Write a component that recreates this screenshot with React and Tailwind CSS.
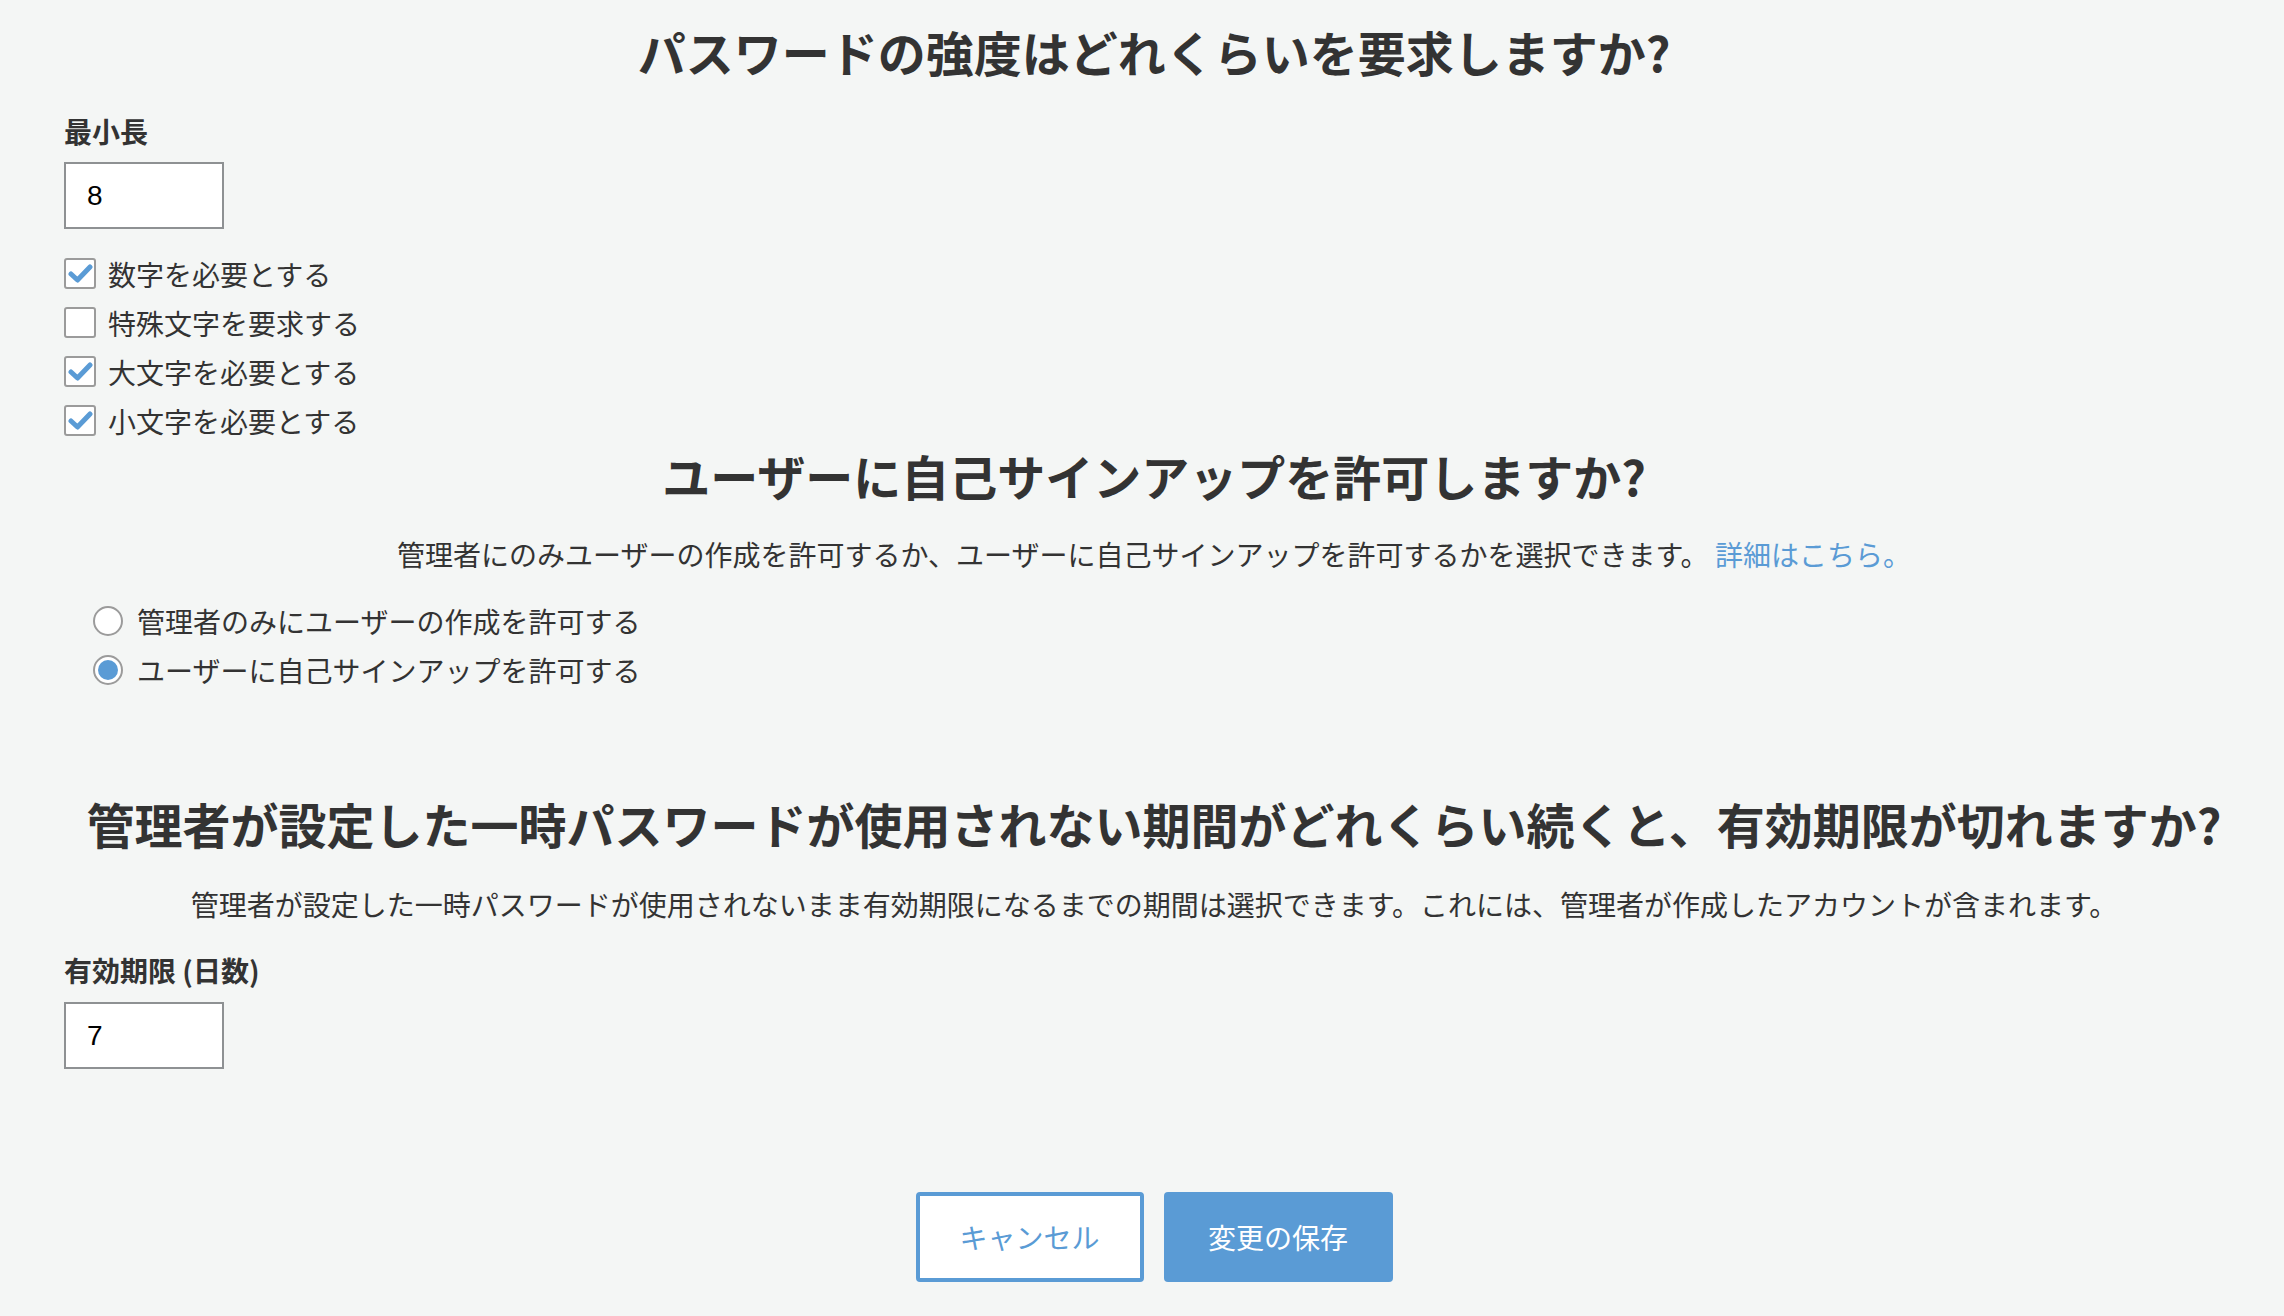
import { useState } from 'react'

function CheckBox({ checked, label }) {
  return (
    <label className="flex h-[49px] items-center gap-[12px]">
      <span className="flex h-[31px] w-[32px] items-center justify-center rounded-[3px] border-2 border-[#9b9b9b] bg-white">
        {checked && (
          <svg width="25" height="19" viewBox="0 0 25 19" fill="none">
            <path d="M3 10 L9.5 16 L22 3" stroke="#5a9bd5" strokeWidth="5" strokeLinecap="round" strokeLinejoin="round" />
          </svg>
        )}
      </span>
      <span className="text-[28px] leading-[40px] text-[#333]">{label}</span>
    </label>
  )
}

function Radio({ checked, label, onClick }) {
  return (
    <label className="flex h-[49px] items-center gap-[14px]" onClick={onClick}>
      <span className="flex h-[30px] w-[30px] items-center justify-center rounded-full border-2 border-[#9b9b9b] bg-white">
        {checked && <span className="h-[20px] w-[20px] rounded-full bg-[#5a9bd5]" />}
      </span>
      <span className="text-[28px] leading-[40px] text-[#333]">{label}</span>
    </label>
  )
}

export default function App() {
  const [mode, setMode] = useState('self')

  return (
    <div className="min-h-screen bg-[#f4f6f5] font-['Noto_Sans_CJK_JP',sans-serif] text-[#333]">
      <div className="pl-[64px] pr-[40px] pt-[21px] pb-[30px]">
        <h1 className="text-center text-[48px] font-bold leading-[60px]">パスワードの強度はどれくらいを要求しますか?</h1>

        <div className="mt-[30px] text-[28px] font-bold leading-[40px]">最小長</div>
        <input
          defaultValue="8"
          className="mt-[11px] block h-[67px] w-[160px] border-2 border-[#8e9193] bg-white px-[21px] font-['Liberation_Sans',sans-serif] text-[28px] text-black outline-none"
        />

        <div className="mt-[20px]">
          <CheckBox checked label="数字を必要とする" />
          <CheckBox label="特殊文字を要求する" />
          <CheckBox checked label="大文字を必要とする" />
          <CheckBox checked label="小文字を必要とする" />
        </div>

        <h2 className="text-center text-[48px] font-bold leading-[60px]">ユーザーに自己サインアップを許可しますか?</h2>
        <p className="mt-[29px] text-center text-[28px] leading-[40px]">
          管理者にのみユーザーの作成を許可するか、ユーザーに自己サインアップを許可するかを選択できます。{' '}
          <a href="#" className="text-[#5a9bd5]">詳細はこちら。</a>
        </p>

        <div className="mt-[22px] pl-[29px]">
          <Radio checked={mode === 'admin'} onClick={() => setMode('admin')} label="管理者のみにユーザーの作成を許可する" />
          <Radio checked={mode === 'self'} onClick={() => setMode('self')} label="ユーザーに自己サインアップを許可する" />
        </div>

        <h2 className="mt-[99px] text-center text-[48px] font-bold leading-[60px]">
          管理者が設定した一時パスワードが使用されない期間がどれくらい続くと、有効期限が切れますか?
        </h2>
        <p className="mt-[31px] text-center text-[28px] leading-[40px]">
          管理者が設定した一時パスワードが使用されないまま有効期限になるまでの期間は選択できます。これには、管理者が作成したアカウントが含まれます。
        </p>

        <div className="mt-[26px] text-[28px] font-bold leading-[40px]">有効期限 (日数)</div>
        <input
          defaultValue="7"
          className="mt-[12px] block h-[67px] w-[160px] border-2 border-[#8e9193] bg-white px-[21px] font-['Liberation_Sans',sans-serif] text-[28px] text-black outline-none"
        />

        <div className="mt-[123px] flex justify-center gap-[20px]">
          <button type="button" className="h-[90px] w-[228px] rounded-[4px] border-4 border-[#5a9bd5] bg-white text-[28px] text-[#5a9bd5]">
            キャンセル
          </button>
          <button type="button" className="h-[90px] w-[229px] rounded-[4px] bg-[#5a9bd5] text-[28px] text-white">
            変更の保存
          </button>
        </div>
      </div>
    </div>
  )
}
